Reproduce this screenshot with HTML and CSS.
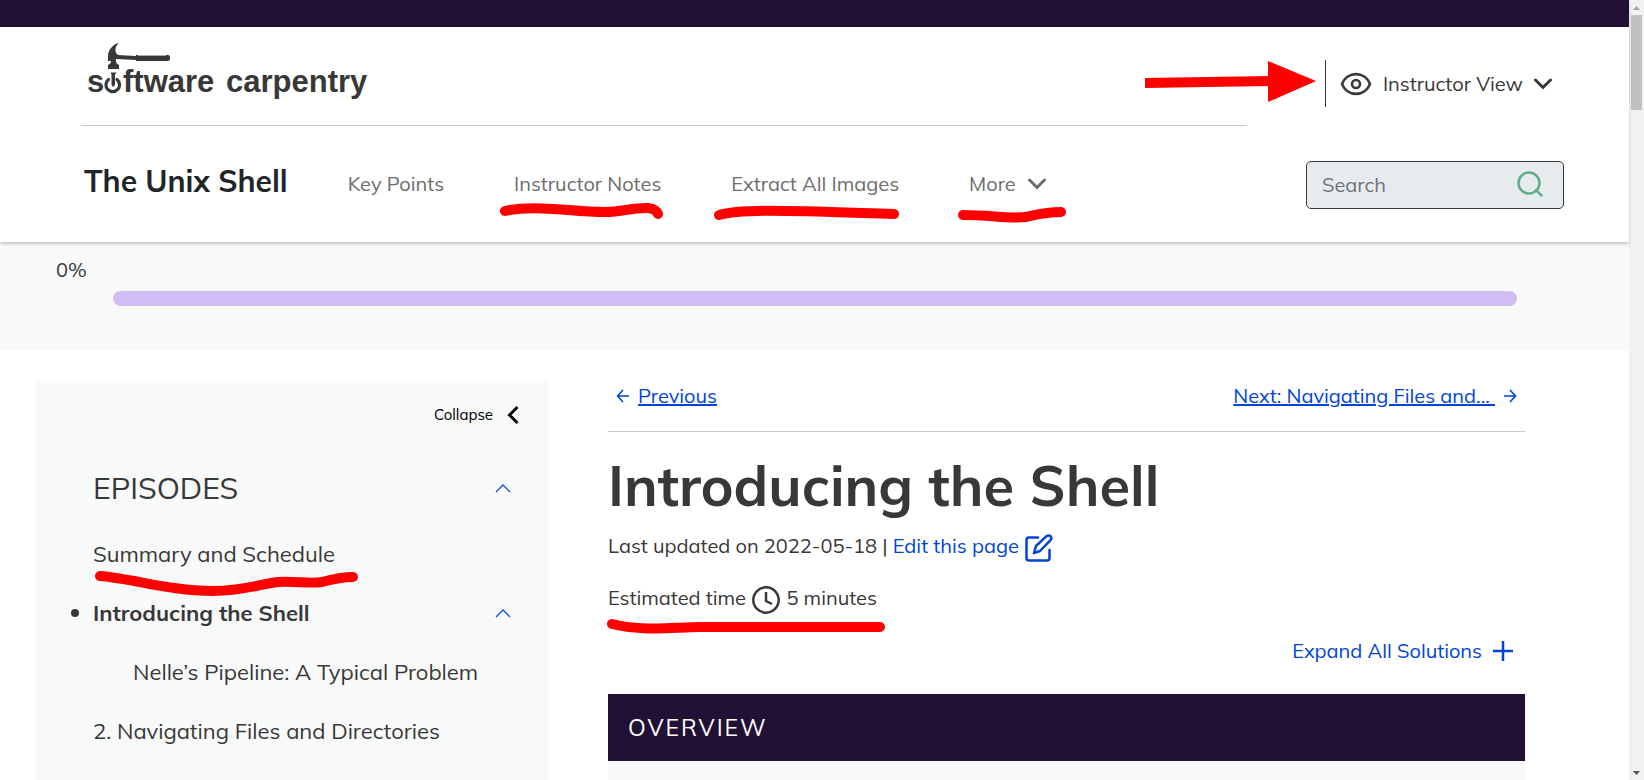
FILE: index.html
```html
<!DOCTYPE html>
<html lang="en">
<head>
<meta charset="utf-8">
<title>The Unix Shell: Introducing the Shell</title>
<link rel="stylesheet" href="styles.css">
</head>
<body>
<div class="page">
  <header class="header">
    <div class="topbar"></div>
    <div class="brand-row">
      <a class="logo" href="#" aria-label="Software Carpentry">
        <svg width="290" height="64" viewBox="80 38 290 64">
          <g fill="#383838">
            <path d="M119 43c-6 1-11 7-11 13v5h3c0 2-1 3-3 4v4h11v-4c-2-1-3-2-3-4v-2l20 1v1l32 0q2 0 2-3t-2-3H136v1l-18-1c-4-3-3-9 1-12z"/>
            <path d="M110.500 72.500h6l-1.500 2v10l-1 2h-1.500l-1-2v-10z"/>
            <text class="logo-text" x="87" y="92">s</text>
            <text class="logo-text" x="123" y="92">ftware</text>
            <text class="logo-text" x="226" y="92">carpentry</text>
          </g>
          <path d="M138 55.500h28" stroke="#aaa" fill="none"/>
          <path d="M108.500 79.500a6.800 6.800 0 1 0 8.500 0" fill="none" stroke="#383838" stroke-width="3.200" stroke-linecap="round"/>
        </svg>
      </a>
      <button class="view" type="button">
        <svg width="32" height="26" viewBox="0 0 32 26" fill="none" stroke="#383838" stroke-width="2.600"><path d="M2 13C7-.2 25-.2 30 13C25 26.200 7 26.200 2 13z" stroke-linejoin="round"/><circle cx="16" cy="13" r="4"/></svg>
        <span>Instructor View</span>
        <svg width="18" height="12" viewBox="0 0 18 12" fill="none" stroke="#383838" stroke-width="3"><path d="M1.500 2 9 9.500 16.500 2" stroke-linecap="round"/></svg>
      </button>
    </div>
    <div class="nav-row">
      <a class="title" href="#">The Unix Shell</a>
      <nav class="nav">
        <a href="#">Key Points</a>
        <a href="#">Instructor Notes</a>
        <a href="#">Extract All Images</a>
        <button class="more" type="button">More
          <svg width="18" height="12" viewBox="0 0 18 12" fill="none" stroke="#6d6d6d" stroke-width="3"><path d="M1.500 2 9 9.500 16.500 2" stroke-linecap="round"/></svg>
        </button>
      </nav>
      <form class="search">
        <input type="search" placeholder="Search" aria-label="Search">
        <button type="button" aria-label="Submit search">
          <svg width="28" height="28" viewBox="0 0 28 28" fill="none" stroke="#5fae8b" stroke-width="2.500"><circle cx="13" cy="13" r="10.500"/><path d="m20 20 5.500 5.500" stroke-linecap="round"/></svg>
        </button>
      </form>
    </div>
  </header>

  <section class="progress">
    <span>0%</span>
    <div class="bar" role="progressbar" aria-label="Lesson progress" aria-valuenow="0" aria-valuemin="0" aria-valuemax="100"></div>
  </section>

  <div class="columns">
    <aside class="sidebar">
      <button class="collapse" type="button">Collapse
        <svg width="12" height="20" viewBox="0 0 12 20" fill="none" stroke="#000" stroke-width="3"><path d="M10.500 2 2.500 10l8 8"/></svg>
      </button>
      <div class="row episodes">
        <h2>EPISODES</h2>
        <button class="fold" type="button" aria-label="Toggle episodes"><svg width="16" height="10" viewBox="0 0 16 10" fill="none" stroke="#1450df" stroke-width="1.300"><path d="m1 9 7-7 7 7"/></svg></button>
      </div>
      <div class="row"><a href="#">Summary and Schedule</a></div>
      <div class="row current">
        <a href="#">Introducing the Shell</a>
        <button class="fold" type="button" aria-label="Toggle sections"><svg width="16" height="10" viewBox="0 0 16 10" fill="none" stroke="#1450df" stroke-width="1.300"><path d="m1 9 7-7 7 7"/></svg></button>
      </div>
      <div class="row sub"><a href="#">Nelle’s Pipeline: A Typical Problem</a></div>
      <div class="row"><a href="#">2. Navigating Files and Directories</a></div>
    </aside>

    <main class="main">
      <nav class="pager">
        <a href="#"><svg width="13" height="14" viewBox="0 0 13 14" fill="none" stroke="#0044d7" stroke-width="1.600"><path d="M13 7H1.500M7 1 1.500 7 7 13"/></svg><span>Previous</span></a>
        <a href="#"><span>Next: Navigating Files and...&nbsp;</span><svg width="13" height="14" viewBox="0 0 13 14" fill="none" stroke="#0044d7" stroke-width="1.600"><path d="M0 7h11.500M6 1l5.500 6L6 13"/></svg></a>
      </nav>
      <h1>Introducing the Shell</h1>
      <p class="meta">Last updated on 2022-05-18 | <a href="#">Edit this page <svg width="30" height="28" viewBox="0 0 30 28" fill="none" stroke="#0044d7" stroke-width="2.500" stroke-linejoin="round" stroke-linecap="round"><path d="M14 3.500H5Q2.500 3.500 2.500 6v18Q2.500 26.500 5 26.500h18q2.500 0 2.500-2.500v-8"/><path d="m10 19 2-7L22.500 2.200q2-1.500 4 0 1.800 2 0 4L16 17z"/></svg></a></p>
      <p class="meta">Estimated time <svg width="30" height="28" viewBox="0 0 30 28" fill="none" stroke="#383838" stroke-width="2.500"><circle cx="15" cy="14" r="12.700"/><path d="M15 6v9l6 3"/></svg> 5 minutes</p>
      <button class="expand" type="button">Expand All Solutions
        <svg width="20" height="20" viewBox="0 0 20 20" fill="none" stroke="#0044d7" stroke-width="2.500"><path d="M10 0v20M0 10h20"/></svg>
      </button>
      <section class="overview">
        <h2>OVERVIEW</h2>
      </section>
    </main>
  </div>
</div>

<div class="scrollbar" aria-hidden="true">
  <svg width="7" height="4" viewBox="0 0 7 4"><path d="M0 4 3.500 0 7 4z" fill="#a3a3a3"/></svg>
  <div class="thumb"></div>
  <svg width="7" height="4" viewBox="0 0 7 4"><path d="M0 0 3.500 4 7 0z" fill="#505050"/></svg>
</div>

<svg class="marks" width="1644" height="780" viewBox="0 0 1644 780" aria-hidden="true">
  <g fill="none" stroke="#f00" stroke-width="10" stroke-linecap="round">
    <path d="M505 211C535 204 570 212 605 212C622 212 635 207 648 208Q656 209 658 214"/>
    <path d="M719 215C742 208 800 211 894 214"/>
    <path d="M963 215C990 215 1010 219 1025 217C1035 215 1045 212 1061 212"/>
    <path d="M100 576C135 579 170 591 213 591C243 591 260 584 278 582C295 581 310 584 322 582C333 579 342 577 353 577"/>
    <path d="M612 624C645 632 675 627 700 627H880"/>
  </g>
  <path d="M1145 83 1270 81" stroke="#f00" stroke-width="10"/>
  <path d="M1268 61v41l48-21z" fill="#f00"/>
</svg>
</body>
</html>
```
FILE: styles.css
```css
* { box-sizing: border-box; }

body {
  margin: 0;
  height: 100vh;
  display: flex;
  overflow: hidden;
  background: #fff;
  color: #383838;
  font: 20px/30px Mulish, Lato, sans-serif;
}

h1, h2, p { margin: 0; }
a { color: inherit; text-decoration: none; }

button {
  display: flex;
  align-items: center;
  padding: 0;
  border: 0;
  background: none;
  color: inherit;
  font: inherit;
}

svg { flex: none; }

.page { flex: 1; min-width: 0; }

.header {
  position: relative;
  height: 242px;
  box-shadow: 0 2px 3px rgba(0, 0, 0, .2);
}

.topbar { height: 27px; background: #211134; }

.brand-row {
  display: flex;
  justify-content: space-between;
  align-items: flex-start;
  height: 99px;
  padding: 11px 77px 0 80px;
  background: linear-gradient(#c9c9c9, #c9c9c9) 81px 98px / calc(75% - 56px) 1px no-repeat;
}

.logo svg { display: block; }
.logo-text { font: bold 31px "Liberation Sans", Arial, sans-serif; }

.view {
  height: 47px;
  margin-top: 22px;
  padding-left: 14px;
  border-left: 1px solid #383838;
  gap: 11px;
}

.nav-row {
  display: flex;
  align-items: center;
  height: 116px;
  padding: 2px 65px 0 84px;
}

.title { margin-bottom: 8px; color: #212529; font-size: 30px; font-weight: 700; }

.nav {
  flex: 1;
  display: flex;
  gap: 70px;
  padding: 0 0 2px 60px;
  color: #6d6d6d;
}

.more { gap: 12px; }

.search {
  display: flex;
  align-items: center;
  width: 258px;
  height: 48px;
  padding: 0 19px 0 15px;
  border: 1px solid #383838;
  border-radius: 5px;
  background: #e7ebee;
}

.search input {
  flex: 1;
  min-width: 0;
  padding: 0;
  border: 0;
  background: none;
  font: inherit;
}

.search button { padding-bottom: 3px; }
.search input::placeholder { color: #6c757d; }

.progress {
  height: 108px;
  padding: 13px 112px 0 56px;
  background: #f8faf9;
}

.progress span { display: block; }

.bar {
  height: 15px;
  margin: 6px 0 0 57px;
  border-radius: 8px;
  background: #d1bcf4;
}

.columns {
  display: grid;
  grid-template-columns: 512px 1fr;
  gap: 60px;
  padding: 31px 104px 0 36px;
}

.sidebar {
  height: 420px;
  padding: 19px 37px 0 57px;
  background: #f8faf9;
  font-size: 22px;
}

.collapse {
  margin: 0 -8px 0 auto;
  gap: 14px;
  color: #000;
  font-size: 15px;
}

.row {
  position: relative;
  display: flex;
  align-items: center;
  justify-content: space-between;
  height: 59px;
}

.episodes { height: 66px; margin-top: 25px; }
.episodes h2 { font-size: 30px; font-weight: 400; }
.episodes + .row { height: 66px; padding-bottom: 0; margin-bottom: -4px; }
.current { font-weight: 700; }

.current::before {
  content: "";
  position: absolute;
  left: -22px;
  width: 8px;
  height: 8px;
  border-radius: 50%;
  background: #383838;
}

.sub { padding-left: 40px; }

.pager {
  display: flex;
  justify-content: space-between;
  height: 51px;
  padding: 0 8px;
  border-bottom: 1px solid #c9c9c9;
  color: #0044d7;
}

.pager a { display: flex; align-items: center; gap: 9px; height: 30px; }
.pager span { text-decoration: underline; text-decoration-thickness: 2px; }

h1 { margin-top: 18px; font-size: 56px; line-height: 70px; }

.meta { height: 52px; line-height: 52px; }
.meta a { color: #0044d7; }
.meta svg { vertical-align: middle; }

.expand {
  height: 30px;
  margin: 12px 12px 0 auto;
  gap: 11px;
  color: #0044d7;
}

.overview { margin-top: 28px; height: 120px; background: #f8faf9; }

.overview h2 {
  padding: 18px 20px;
  background: #211134;
  color: #fff;
  font-size: 23px;
  font-weight: 400;
  line-height: 31px;
  letter-spacing: 2px;
}

.scrollbar {
  display: flex;
  flex-direction: column;
  align-items: center;
  width: 15px;
  padding: 6px 0 5px;
  background: #f1f1f1;
}

.thumb {
  width: 11px;
  height: 95px;
  margin: 5px 0 auto;
  background: #c1c1c1;
}

.marks { position: absolute; top: 0; left: 0; pointer-events: none; }
```
